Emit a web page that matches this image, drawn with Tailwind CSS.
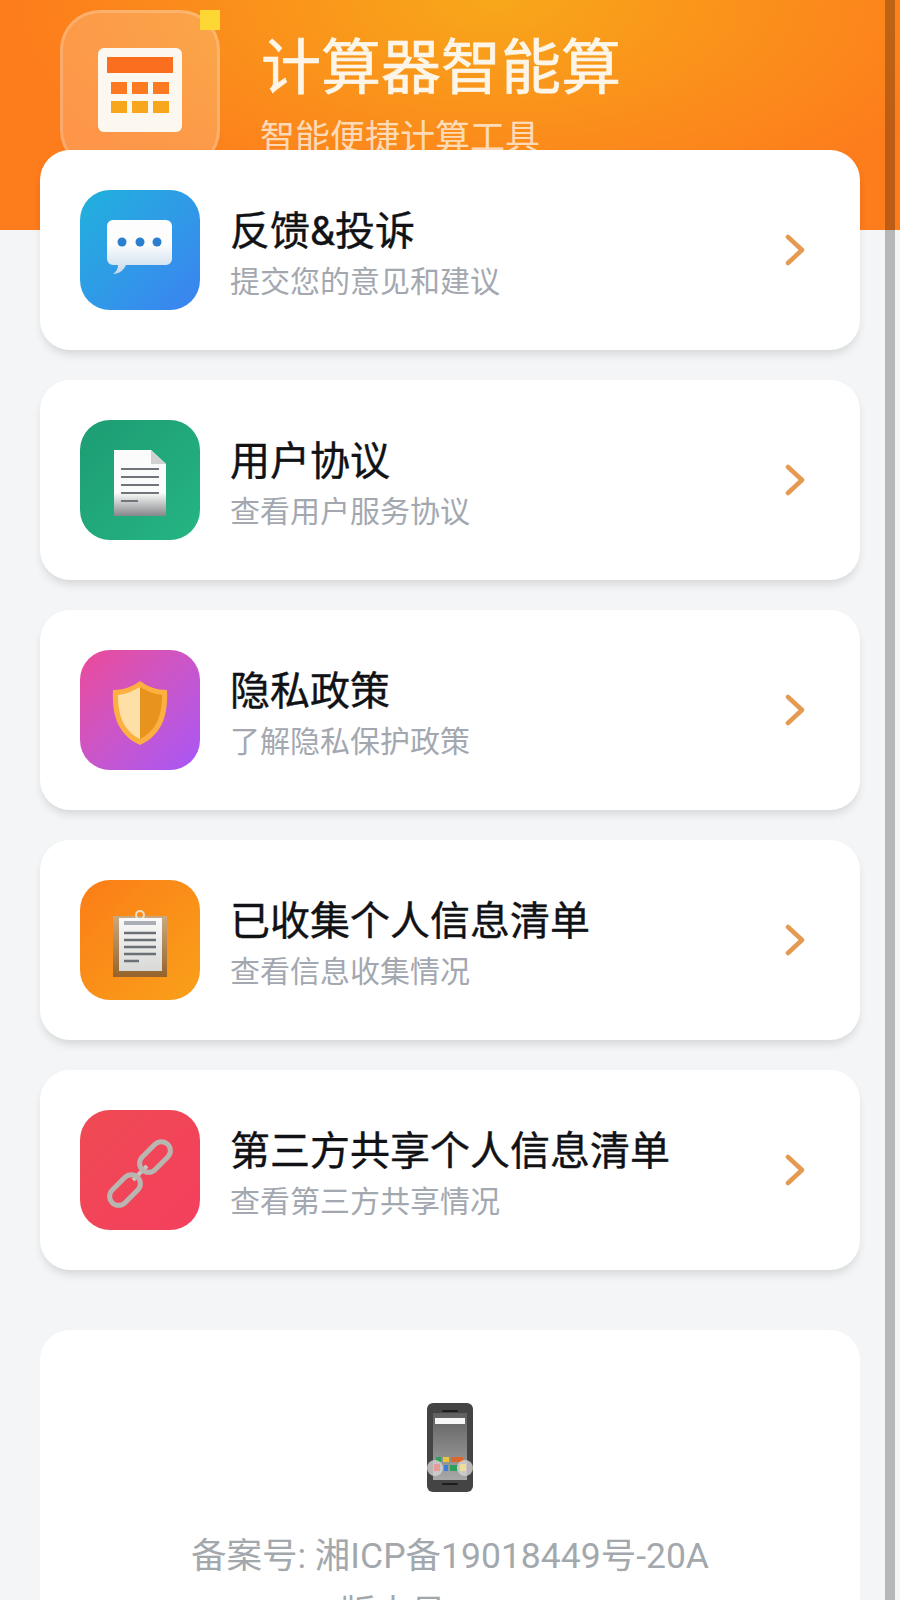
<!DOCTYPE html>
<html lang="zh">
<head>
    <meta charset="UTF-8">
    <meta name="viewport" content="width=device-width, initial-scale=1.0">
    <title>计算器智能算</title>
    <script src="https://cdn.jsdelivr.net/npm/@tailwindcss/browser@4"></script>
</head>
<body class="bg-[#f3f5f7] font-['Roboto','Noto_Sans_CJK_SC',sans-serif]">
<div class="relative h-[1600px] overflow-hidden">
    <!-- header -->
    <header class="h-[230px] flex items-start pl-[60px] bg-[radial-gradient(ellipse_at_55%_0%,#f8a71a,#fd7c1c_70%)]">
        <div class="relative mt-[10px] w-[160px] h-[160px] shrink-0 rounded-[40px] border-[3px] border-white/20 bg-white/20 flex items-center justify-center">
            <div class="w-[84px] h-[84px] rounded-[6px] bg-[#fdf8ef] flex flex-col items-center pt-[9px]">
                <div class="w-[66px] h-[16px] bg-[#fb6e1f]"></div>
                <div class="grid grid-cols-3 gap-x-[5px] gap-y-[7px] mt-[9px]">
                    <div class="w-[16px] h-[12px] bg-[#fb7a22]"></div>
                    <div class="w-[16px] h-[12px] bg-[#fb7a22]"></div>
                    <div class="w-[16px] h-[12px] bg-[#fb7a22]"></div>
                    <div class="w-[16px] h-[12px] bg-[#f8a61c]"></div>
                    <div class="w-[16px] h-[12px] bg-[#f8a61c]"></div>
                    <div class="w-[16px] h-[12px] bg-[#f8a61c]"></div>
                </div>
            </div>
            <div class="absolute top-[-3px] right-[-3px] w-[20px] h-[20px] bg-[#fdd835]"></div>
        </div>
        <div class="ml-[41px] text-[#fdf6e8]">
            <h1 class="mt-[31px] text-[60px] leading-[76px] font-normal [-webkit-text-stroke:0.7px_#fdf6e8]">计算器智能算</h1>
            <p class="mt-[10px] ml-[-1px] text-[35px] leading-[44px] text-white/70">智能便捷计算工具</p>
        </div>
    </header>

    <!-- menu -->
    <main class="relative mt-[-80px] px-[40px] flex flex-col gap-[30px]">
        <a class="h-[200px] rounded-[30px] bg-white shadow-[0_6px_10px_-2px_rgba(0,0,0,0.13)] flex items-center pl-[40px] pr-[55px]">
            <div class="w-[120px] h-[120px] shrink-0 rounded-[30px] bg-gradient-to-br from-[#1fb1dc] to-[#3b82f0] flex items-center justify-center">
                <svg class="mb-[5px]" width="66" height="55" viewBox="0 0 66 55"><defs><linearGradient id="b" x1="0" y1="0" x2="0" y2="1"><stop offset="0.45" stop-color="#fdfdfd"/><stop offset="1" stop-color="#c4d8ec"/></linearGradient></defs><path d="M6 0H59a6 6 0 0 1 6 6V39a6 6 0 0 1-6 6H19C17 50 12 54 6 54C9 52 11 49 11 45H6a6 6 0 0 1-6-6V6A6 6 0 0 1 6 0Z" fill="url(#b)"/><circle cx="15" cy="22" r="4.5" fill="#2a7fcf"/><circle cx="33" cy="22" r="4.5" fill="#2a7fcf"/><circle cx="50" cy="22" r="4.5" fill="#2a7fcf"/></svg>
            </div>
            <div class="ml-[30px] flex-1 pt-[7px]">
                <h3 class="text-[40px] leading-[50px] font-normal text-[#101216] [-webkit-text-stroke:0.4px_#101216]">反馈&amp;投诉</h3>
                <p class="mt-[6px] text-[30px] leading-[38px] text-[#a3a8b0]">提交您的意见和建议</p>
            </div>
            <svg width="20" height="32" viewBox="0 0 20 32" fill="none"><path d="M3 3L17 16L3 29" stroke="#e59a52" stroke-width="4.5" stroke-linecap="round" stroke-linejoin="round"/></svg>
        </a>

        <a class="h-[200px] rounded-[30px] bg-white shadow-[0_6px_10px_-2px_rgba(0,0,0,0.13)] flex items-center pl-[40px] pr-[55px]">
            <div class="w-[120px] h-[120px] shrink-0 rounded-[30px] bg-gradient-to-br from-[#1d9c73] to-[#25b583] flex items-center justify-center">
                <svg class="mt-[6px]" width="52" height="66" viewBox="0 0 52 66"><defs><linearGradient id="d" x1="0" y1="0" x2="0" y2="1"><stop offset="0.65" stop-color="#fbfbfb"/><stop offset="1" stop-color="#85878a"/></linearGradient></defs><path d="M0 0H37L52 14V66H0Z" fill="url(#d)"/><path d="M37 0L52 14H37Z" fill="#d0d2d2"/><path d="M7 19H45M7 27H45M7 35H45M7 43H45M7 51H24" stroke="#70757b" stroke-width="2"/></svg>
            </div>
            <div class="ml-[30px] flex-1 pt-[7px]">
                <h3 class="text-[40px] leading-[50px] font-normal text-[#101216] [-webkit-text-stroke:0.4px_#101216]">用户协议</h3>
                <p class="mt-[6px] text-[30px] leading-[38px] text-[#a3a8b0]">查看用户服务协议</p>
            </div>
            <svg width="20" height="32" viewBox="0 0 20 32" fill="none"><path d="M3 3L17 16L3 29" stroke="#e59a52" stroke-width="4.5" stroke-linecap="round" stroke-linejoin="round"/></svg>
        </a>

        <a class="h-[200px] rounded-[30px] bg-white shadow-[0_6px_10px_-2px_rgba(0,0,0,0.13)] flex items-center pl-[40px] pr-[55px]">
            <div class="w-[120px] h-[120px] shrink-0 rounded-[30px] bg-gradient-to-br from-[#ec4899] to-[#a855f7] flex items-center justify-center">
                <svg class="mt-[6px]" width="56" height="66" viewBox="0 0 56 66"><path d="M28 1C36 7 45 10 55 10C56 32 52 54 28 65C4 54 0 32 1 10C11 10 20 7 28 1Z" fill="#fbb040"/><path d="M28 7C21 11 14 14 6 15C6 33 10 50 28 59Z" fill="#fde0a8"/><path d="M28 7C35 11 42 14 50 15C50 33 46 50 28 59Z" fill="#e8931e"/></svg>
            </div>
            <div class="ml-[30px] flex-1 pt-[7px]">
                <h3 class="text-[40px] leading-[50px] font-normal text-[#101216] [-webkit-text-stroke:0.4px_#101216]">隐私政策</h3>
                <p class="mt-[6px] text-[30px] leading-[38px] text-[#a3a8b0]">了解隐私保护政策</p>
            </div>
            <svg width="20" height="32" viewBox="0 0 20 32" fill="none"><path d="M3 3L17 16L3 29" stroke="#e59a52" stroke-width="4.5" stroke-linecap="round" stroke-linejoin="round"/></svg>
        </a>

        <a class="h-[200px] rounded-[30px] bg-white shadow-[0_6px_10px_-2px_rgba(0,0,0,0.13)] flex items-center pl-[40px] pr-[55px]">
            <div class="w-[120px] h-[120px] shrink-0 rounded-[30px] bg-gradient-to-br from-[#fb7d17] to-[#f9a01a] flex items-center justify-center">
                <svg class="mt-[6px]" width="54" height="67" viewBox="0 0 54 67"><defs><linearGradient id="p" x1="0" y1="0" x2="0" y2="1"><stop offset="0" stop-color="#fafafa"/><stop offset="1" stop-color="#d8d8d6"/></linearGradient><linearGradient id="c" x1="0" y1="0" x2="0" y2="1"><stop offset="0" stop-color="#c9a980"/><stop offset="1" stop-color="#95632b"/></linearGradient></defs><rect y="6" width="54" height="61" fill="url(#c)"/><circle cx="27" cy="5" r="4" fill="none" stroke="#f0dfc8" stroke-width="2"/><rect x="6" y="8" width="43" height="53" fill="url(#p)"/><path d="M11 13H43" stroke="#a9afb4" stroke-width="4"/><path d="M11 23H43M11 30H43M11 37H43M11 44H43M11 51H26" stroke="#6a7076" stroke-width="2.5"/></svg>
            </div>
            <div class="ml-[30px] flex-1 pt-[7px]">
                <h3 class="text-[40px] leading-[50px] font-normal text-[#101216] [-webkit-text-stroke:0.4px_#101216]">已收集个人信息清单</h3>
                <p class="mt-[6px] text-[30px] leading-[38px] text-[#a3a8b0]">查看信息收集情况</p>
            </div>
            <svg width="20" height="32" viewBox="0 0 20 32" fill="none"><path d="M3 3L17 16L3 29" stroke="#e59a52" stroke-width="4.5" stroke-linecap="round" stroke-linejoin="round"/></svg>
        </a>

        <a class="h-[200px] rounded-[30px] bg-white shadow-[0_6px_10px_-2px_rgba(0,0,0,0.13)] flex items-center pl-[40px] pr-[55px]">
            <div class="w-[120px] h-[120px] shrink-0 rounded-[30px] bg-gradient-to-br from-[#ef4a52] to-[#f43f5e] flex items-center justify-center">
                <svg class="mt-[6px] overflow-visible" width="68" height="68" viewBox="0 0 68 68" fill="none"><path d="M27 41L41 27" stroke="#c9c6c2" stroke-width="4"/><rect x="40" y="0" width="18" height="36" rx="9" transform="rotate(45 49 18)" stroke="#b9b6b2" stroke-width="5"/><rect x="10" y="33" width="18" height="36" rx="9" transform="rotate(45 19 51)" stroke="#b9b6b2" stroke-width="5"/></svg>
            </div>
            <div class="ml-[30px] flex-1 pt-[7px]">
                <h3 class="text-[40px] leading-[50px] font-normal text-[#101216] [-webkit-text-stroke:0.4px_#101216]">第三方共享个人信息清单</h3>
                <p class="mt-[6px] text-[30px] leading-[38px] text-[#a3a8b0]">查看第三方共享情况</p>
            </div>
            <svg width="20" height="32" viewBox="0 0 20 32" fill="none"><path d="M3 3L17 16L3 29" stroke="#e59a52" stroke-width="4.5" stroke-linecap="round" stroke-linejoin="round"/></svg>
        </a>

        <!-- about -->
        <section class="mt-[30px] h-[340px] rounded-[30px] bg-white flex flex-col items-center pt-[73px]">
            <svg width="46" height="89" viewBox="0 0 46 89"><defs><linearGradient id="s" x1="0" y1="0" x2="0" y2="1"><stop offset="0" stop-color="#5f5f5f"/><stop offset="1" stop-color="#a8a8a8"/></linearGradient></defs><rect width="46" height="89" rx="6" fill="#444"/><rect x="6" y="10" width="34" height="67" fill="url(#s)"/><rect x="8" y="15" width="30" height="6" fill="#f7f7f7"/><rect x="9" y="54" width="5" height="5" fill="#2e9e5b"/><rect x="16" y="54" width="6" height="5" fill="#e8c53a"/><rect x="24" y="54" width="12" height="5" fill="#d9652f"/><rect x="17" y="62" width="4" height="6" fill="#3b7fd6"/><rect x="23" y="62" width="7" height="6" fill="#2e9e5b"/><circle cx="8" cy="65" r="8" fill="#d8d2d2" opacity=".8"/><circle cx="38" cy="65" r="8" fill="#d8d2d2" opacity=".8"/><rect x="7" y="61" width="6" height="7" fill="#e79a9a"/><rect x="33" y="61" width="6" height="7" fill="#f0dd9a"/><rect x="15" y="7" width="16" height="2" rx="1" fill="#1d1d1d"/><rect x="15" y="80" width="16" height="2" rx="1" fill="#1d1d1d"/></svg>
            <p class="mt-[41px] text-[35.5px] leading-[46px] text-[#a3a8ad]">备案号: 湘ICP备19018449号-20A</p>
            <p class="mt-[11px] text-[35.5px] leading-[46px] text-[#a3a8ad]">版本号：1.0.0</p>
        </section>
    </main>

    <!-- scrollbar overlay -->
    <div class="absolute top-0 right-[5px] w-[10px] h-[1600px] bg-black/25"></div>
</div>
</body>
</html>
